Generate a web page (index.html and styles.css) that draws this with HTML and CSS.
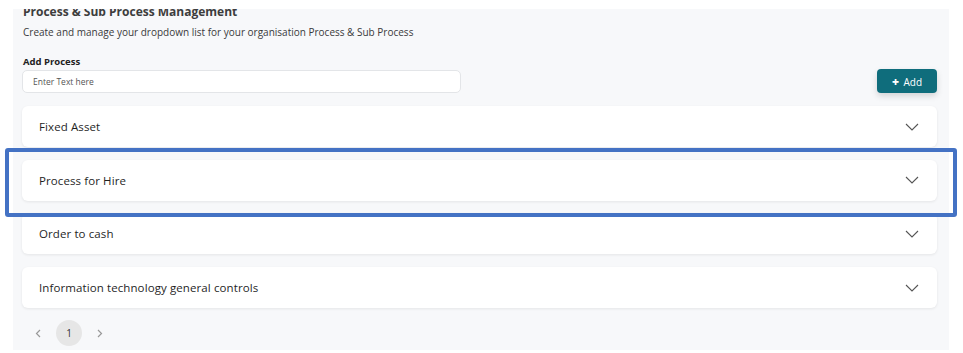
FILE: index.html
```html
<!DOCTYPE html>
<html lang="en">
<head>
    <meta charset="UTF-8">
    <meta name="viewport" content="width=device-width, initial-scale=1.0">
    <title>Process & Sub Process Management</title>
    <link rel="stylesheet" href="styles.css">
</head>
<body>
    <div class="panel">
        <h2 class="title">Process &amp; Sub Process Management</h2>
        <p class="subtitle">Create and manage your dropdown list for your organisation Process &amp; Sub Process</p>

        <div class="add-row">
            <div class="field">
                <label class="label" for="processName">Add Process</label>
                <input class="input" id="processName" type="text" placeholder="Enter Text here">
            </div>
            <button class="add-btn"><span class="plus">+</span> Add</button>
        </div>

        <div class="list">
            <div class="item">
                <span class="item-name">Fixed Asset</span>
                <svg class="chevron" width="14" height="8" viewBox="0 0 14 8"><path d="M1 1 L7 7 L13 1" fill="none" stroke="#555" stroke-width="1.1"/></svg>
            </div>
            <div class="item">
                <span class="item-name">Process for Hire</span>
                <svg class="chevron" width="14" height="8" viewBox="0 0 14 8"><path d="M1 1 L7 7 L13 1" fill="none" stroke="#555" stroke-width="1.1"/></svg>
            </div>
            <div class="item">
                <span class="item-name">Order to cash</span>
                <svg class="chevron" width="14" height="8" viewBox="0 0 14 8"><path d="M1 1 L7 7 L13 1" fill="none" stroke="#555" stroke-width="1.1"/></svg>
            </div>
            <div class="item">
                <span class="item-name">Information technology general controls</span>
                <svg class="chevron" width="14" height="8" viewBox="0 0 14 8"><path d="M1 1 L7 7 L13 1" fill="none" stroke="#555" stroke-width="1.1"/></svg>
            </div>
        </div>

        <div class="pager">
            <svg class="pager-arrow" width="6" height="9" viewBox="0 0 6 9"><path d="M5 1 L1.5 4.5 L5 8" fill="none" stroke="#999" stroke-width="1.2"/></svg>
            <span class="pager-page">1</span>
            <svg class="pager-arrow" width="6" height="9" viewBox="0 0 6 9"><path d="M1 1 L4.5 4.5 L1 8" fill="none" stroke="#999" stroke-width="1.2"/></svg>
        </div>
    </div>

    <div class="highlight"></div>
</body>
</html>
```

FILE: styles.css
```css
body {
    margin: 0;
    padding: 0;
    background-color: #ffffff;
    font-family: "Open Sans", "Liberation Sans", sans-serif;
    color: #333;
}
.panel {
    margin: 9px 0 0 13px;
    width: 936px;
    height: 341px;
    box-sizing: border-box;
    padding: 0 12px 0 9px;
    background-color: #f7f8fa;
    overflow: hidden;
}
.title {
    margin: -5px 0 0 1px;
    font-size: 12px;
    line-height: 16px;
    font-weight: 700;
    color: #3d3d3d;
}
.subtitle {
    margin: 5px 0 0 1px;
    font-size: 10px;
    line-height: 14px;
    color: #3a3a3a;
}
.add-row {
    display: flex;
    justify-content: space-between;
    align-items: flex-end;
    margin-top: 16px;
}
.field {
    display: flex;
    flex-direction: column;
}
.label {
    margin-left: 1px;
    font-size: 9.5px;
    line-height: 13px;
    font-weight: 700;
    color: #222;
}
.input {
    margin-top: 2px;
    width: 439px;
    height: 23px;
    box-sizing: border-box;
    padding: 0 10px;
    border: 1px solid #e3e5e8;
    border-radius: 5px;
    background-color: #fff;
    font-family: inherit;
    font-size: 8.5px;
}
.input::placeholder {
    color: #555;
}
.add-btn {
    width: 60px;
    height: 24px;
    border: none;
    border-radius: 4px;
    background-color: #0f6d7c;
    color: #fff;
    font-family: inherit;
    font-size: 10px;
    box-shadow: 0 3px 6px rgba(0, 0, 0, 0.15);
    cursor: pointer;
}
.plus {
    font-weight: 800;
    font-size: 12px;
    margin-right: 2px;
}
.list {
    display: flex;
    flex-direction: column;
    gap: 12.7px;
    margin-top: 13px;
}
.item {
    height: 41px;
    box-sizing: border-box;
    display: flex;
    align-items: center;
    justify-content: space-between;
    padding: 0 18px 0 17px;
    background-color: #fff;
    border-radius: 6px;
    box-shadow: 0 1px 3px rgba(0, 0, 0, 0.08);
}
.item-name {
    font-size: 11.5px;
    font-weight: 500;
    letter-spacing: 0.1px;
    color: #1f1f1f;
}
.pager {
    display: flex;
    align-items: center;
    gap: 15px;
    margin: 12px 0 0 13px;
}
.pager-page {
    width: 26px;
    height: 26px;
    border-radius: 50%;
    background-color: #e6e6e6;
    display: flex;
    align-items: center;
    justify-content: center;
    font-size: 10px;
    color: #333;
}
.highlight {
    position: absolute;
    left: 5px;
    top: 148px;
    width: 952px;
    height: 69px;
    box-sizing: border-box;
    border: 4px solid #4472c4;
    border-radius: 3px;
}
```
